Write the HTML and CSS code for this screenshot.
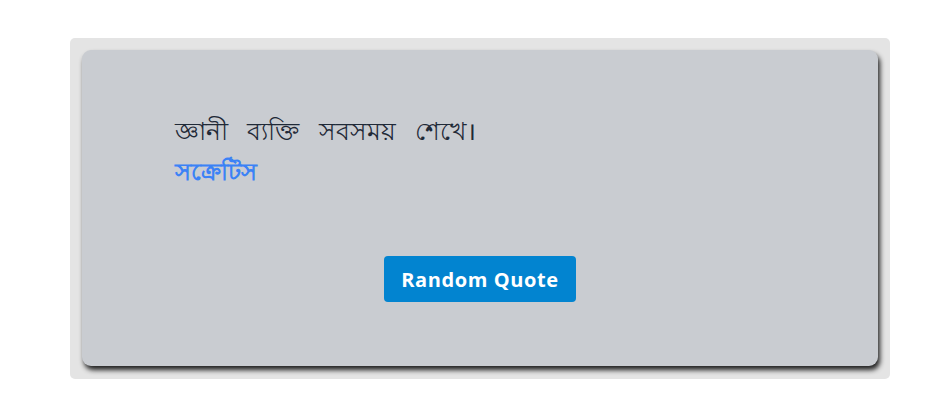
FILE: index.html
```html
<!DOCTYPE html>
<html lang="bn">
<head>
<meta charset="utf-8">
<link rel="stylesheet" href="styles.css">
</head>
<body>
<div class="page">
  <div class="frame">
    <div class="card">
      <div class="quote">
        <p class="text">জ্ঞানী ব্যক্তি সবসময় শেখে।</p>
        <p class="author">সক্রেটিস</p>
      </div>
      <div class="actions">
        <button class="btn">Random Quote</button>
      </div>
    </div>
  </div>
</div>
</body>
</html>
```

FILE: styles.css
```css
* { box-sizing: border-box; }
html, body { margin: 0; padding: 0; background: #ffffff; }
body { font-family: "Open Sans", "Noto Sans", sans-serif; }
.page { padding: 38px 58px 0 70px; }
.frame {
  width: 820px;
  height: 341px;
  background: #e4e4e4;
  border-radius: 5px;
  padding: 12px;
}
.card {
  height: 316px;
  background: #c9ccd1;
  border-radius: 9px;
  box-shadow: 2px 4px 5px rgba(0,0,0,0.85);
  padding: 60px 93px 0 93px;
  display: flex;
  flex-direction: column;
}
.quote { height: 146px; }
.text {
  margin: 0;
  font-size: 25px;
  color: #1f2937;
  line-height: 40px;
  word-spacing: 13px;
}
.author {
  margin: 6px 0 0 0;
  font-size: 24px;
  font-weight: 700;
  color: #3b82f6;
  line-height: 30px;
}
.actions { display: flex; justify-content: center; }
.btn {
  font-family: "Open Sans", sans-serif;
  font-weight: 700;
  font-size: 20px;
  letter-spacing: 0.6px;
  color: #ffffff;
  background: #0284d0;
  border: none;
  border-radius: 4px;
  width: 192px;
  height: 46px;
  padding: 0;
  cursor: pointer;
}
```
